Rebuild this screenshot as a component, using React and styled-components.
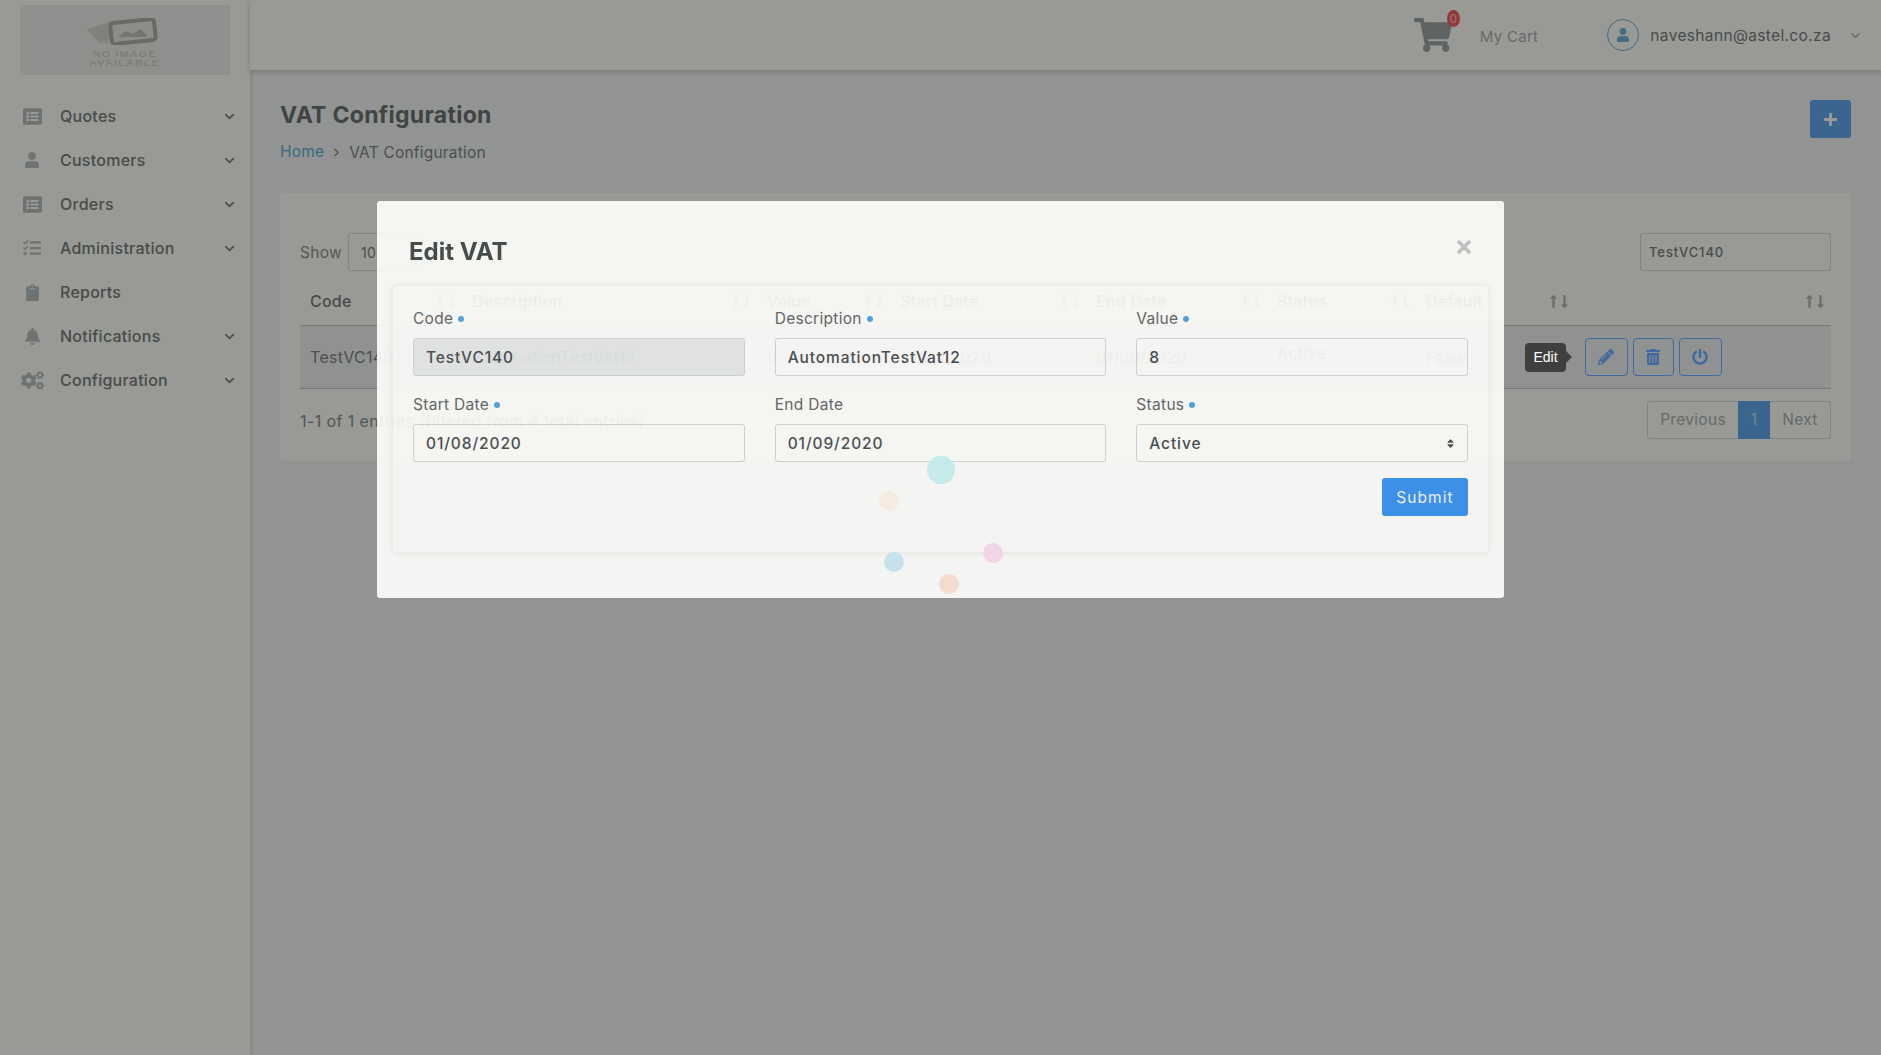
import styled, { createGlobalStyle } from "styled-components";
import {
  FaListAlt,
  FaUser,
  FaTasks,
  FaClipboard,
  FaBell,
  FaCogs,
  FaShoppingCart,
  FaPencilAlt,
  FaTrashAlt,
  FaPowerOff,
  FaPlus,
  FaTimes,
  FaSort,
  FaLongArrowAltUp,
  FaLongArrowAltDown,
} from "react-icons/fa";
import { FiChevronDown, FiChevronRight } from "react-icons/fi";

const GlobalStyle = createGlobalStyle`
  html, body {
    margin: 0;
    padding: 0;
    height: 100%;
    overflow: hidden;
  }
  body {
    font-family: Inter, "Open Sans", sans-serif;
    color: #6c757d;
    background: #f1f4f3;
  }
  * { box-sizing: border-box; }
`;

const NAV_ITEMS = [
  { label: "Quotes", icon: <FaListAlt size={19} />, arrow: true },
  { label: "Customers", icon: <FaUser size={16} />, arrow: true },
  { label: "Orders", icon: <FaListAlt size={19} />, arrow: true },
  { label: "Administration", icon: <FaTasks size={18} />, arrow: true },
  { label: "Reports", icon: <FaClipboard size={17} /> },
  { label: "Notifications", icon: <FaBell size={17} />, arrow: true },
  { label: "Configuration", icon: <FaCogs size={23} />, arrow: true },
];

const COLUMNS = [
  { label: "Code", width: 162 },
  { label: "Description", width: 295 },
  { label: "Value", width: 133 },
  { label: "Start Date", width: 196 },
  { label: "End Date", width: 181 },
  { label: "Status", width: 149 },
  { label: "Default", width: 159 },
  { label: "", width: 256 },
];

const SPINNER_DOTS = [
  { x: 940.5, y: 470, size: 28, color: "#c4eaea" },
  { x: 889, y: 500.5, size: 20, color: "#f5ebe0" },
  { x: 992.5, y: 552.5, size: 20, color: "#f2d5e6" },
  { x: 894, y: 562, size: 20, color: "#c4e1ec" },
  { x: 948.5, y: 584, size: 20, color: "#f3dbd1" },
];

const SortArrows = () => (
  <SortIcon>
    <FaLongArrowAltUp />
    <FaLongArrowAltDown />
  </SortIcon>
);

const App = () => {
  return (
    <Page>
      <GlobalStyle />
      <Sidebar>
        <Logo>
          <svg width="76" height="27" viewBox="0 0 76 27">
            <path d="M0 11 L24 4 L21 25 L13 25 Z" fill="#d3d4ce" />
            <rect
              x="24"
              y="3"
              width="44"
              height="21"
              rx="3"
              transform="rotate(-6 46 14)"
              fill="#e8e8e5"
              stroke="#aeaeab"
              strokeWidth="4"
            />
            <path d="M31 19 L39 13 L46 16 L53 11 L60 17 L60 19 Z" fill="#c0c0bd" />
          </svg>
          <LogoText>NO IMAGE</LogoText>
          <LogoText>AVAILABLE</LogoText>
        </Logo>
        <Nav>
          {NAV_ITEMS.map((item) => (
            <NavItem key={item.label}>
              <NavIcon>{item.icon}</NavIcon>
              <NavLabel>{item.label}</NavLabel>
              {item.arrow && (
                <NavArrow>
                  <FiChevronDown size={15} strokeWidth={2.5} />
                </NavArrow>
              )}
            </NavItem>
          ))}
        </Nav>
      </Sidebar>

      <Main>
        <Topbar>
          <CartBlock>
            <CartIcon>
              <FaShoppingCart size={38} />
              <CartBadge>0</CartBadge>
            </CartIcon>
            <CartLabel>My Cart</CartLabel>
          </CartBlock>
          <UserBlock>
            <Avatar>
              <FaUser size={14} />
            </Avatar>
            <UserEmail>naveshann@astel.co.za</UserEmail>
            <UserArrow>
              <FiChevronDown size={15} strokeWidth={2} />
            </UserArrow>
          </UserBlock>
        </Topbar>

        <Content>
          <PageHead>
            <div>
              <Title>VAT Configuration</Title>
              <Breadcrumb>
                <HomeLink>Home</HomeLink>
                <FiChevronRight size={13} />
                <span>VAT Configuration</span>
              </Breadcrumb>
            </div>
            <AddButton>
              <FaPlus size={15} />
            </AddButton>
          </PageHead>

          <TableCard>
            <TableTools>
              <ShowBox>
                <span>Show</span>
                <ShowSelect>10</ShowSelect>
              </ShowBox>
              <SearchInput defaultValue="TestVC140" />
            </TableTools>
            <DataTable>
              <colgroup>
                {COLUMNS.map((col) => (
                  <col key={col.label} style={{ width: col.width }} />
                ))}
              </colgroup>
              <thead>
                <tr>
                  {COLUMNS.map((col) => (
                    <HeadCell key={col.label}>
                      <HeadInner>
                        {col.label}
                        <SortArrows />
                      </HeadInner>
                    </HeadCell>
                  ))}
                </tr>
              </thead>
              <tbody>
                <BodyRow>
                  <BodyCell>TestVC140</BodyCell>
                  <BodyCell>AutomationTestVat12</BodyCell>
                  <BodyCell>8</BodyCell>
                  <BodyCell>01/08/2020</BodyCell>
                  <BodyCell>01/09/2020</BodyCell>
                  <BodyCell $raised>Active</BodyCell>
                  <BodyCell>False</BodyCell>
                  <ActionCell>
                    <Tooltip>Edit</Tooltip>
                    <ActionButtons>
                      <ActionButton $width={43}>
                        <FaPencilAlt size={16} />
                      </ActionButton>
                      <ActionButton $width={41}>
                        <FaTrashAlt size={16} />
                      </ActionButton>
                      <ActionButton $width={43}>
                        <FaPowerOff size={16} />
                      </ActionButton>
                    </ActionButtons>
                  </ActionCell>
                </BodyRow>
              </tbody>
            </DataTable>
            <TableFooter>
              <FooterText>1-1 of 1 entries (filtered from 4 total entries)</FooterText>
              <Pagination>
                <PageLink $width={90}>Previous</PageLink>
                <PageLink $width={32} $active>
                  1
                </PageLink>
                <PageLink $width={60}>Next</PageLink>
              </Pagination>
            </TableFooter>
          </TableCard>
        </Content>
      </Main>

      <Overlay>
        <Modal>
          <ModalHeader>
            <ModalTitle>Edit VAT</ModalTitle>
            <CloseButton>
              <FaTimes size={20} />
            </CloseButton>
          </ModalHeader>
          <FormCard>
            <FormGrid>
              <Field>
                <FieldLabel $required>Code</FieldLabel>
                <TextInput defaultValue="TestVC140" $disabled readOnly />
              </Field>
              <Field>
                <FieldLabel $required>Description</FieldLabel>
                <TextInput defaultValue="AutomationTestVat12" />
              </Field>
              <Field>
                <FieldLabel $required>Value</FieldLabel>
                <TextInput defaultValue="8" />
              </Field>
              <Field>
                <FieldLabel $required>Start Date</FieldLabel>
                <TextInput defaultValue="01/08/2020" />
              </Field>
              <Field>
                <FieldLabel>End Date</FieldLabel>
                <TextInput defaultValue="01/09/2020" />
              </Field>
              <Field>
                <FieldLabel $required>Status</FieldLabel>
                <SelectBox>
                  Active
                  <FaSort size={11} />
                </SelectBox>
              </Field>
            </FormGrid>
            <FormActions>
              <SubmitButton>Submit</SubmitButton>
            </FormActions>
          </FormCard>
        </Modal>
        {SPINNER_DOTS.map((dot) => (
          <SpinnerDot
            key={dot.x}
            $size={dot.size}
            $color={dot.color}
            style={{ left: dot.x - dot.size / 2, top: dot.y - dot.size / 2 }}
          />
        ))}
      </Overlay>
    </Page>
  );
};

export default App;

const Page = styled.div`
  display: flex;
  width: 100%;
  height: 100vh;
`;

const Sidebar = styled.aside`
  flex: 0 0 250px;
  height: 100%;
  background: #fdfdf9;
  box-shadow: 1px 0 4px rgba(0, 0, 0, 0.15);
  padding: 5px 20px 0;
`;

const Logo = styled.div`
  height: 70px;
  background: #ededeb;
  display: flex;
  flex-direction: column;
  align-items: center;
  padding-top: 13px;

  svg {
    flex: none;
    margin-bottom: 5px;
  }
`;

const LogoText = styled.div`
  font-family: "Liberation Sans", sans-serif;
  font-size: 9px;
  line-height: 9px;
  color: #cfcfcc;
  letter-spacing: 1px;
  font-weight: 700;
  transform: scaleX(1.2);
`;

const Nav = styled.nav`
  margin-top: 19px;
`;

const NavItem = styled.div`
  height: 44px;
  display: flex;
  align-items: center;
`;

const NavIcon = styled.span`
  width: 26px;
  display: flex;
  justify-content: center;
  color: #b4bcc0;
  margin-right: 15px;
  margin-left: -1px;
`;

const NavLabel = styled.span`
  flex: 1;
  font-size: 16px;
  font-weight: 500;
  letter-spacing: 0.25px;
  color: #767a7c;
`;

const NavArrow = styled.span`
  display: flex;
  color: #767a7c;
  margin-right: -7px;
`;

const Main = styled.div`
  flex: 1;
  min-width: 0;
  display: flex;
  flex-direction: column;
`;

const Topbar = styled.header`
  height: 70px;
  background: #fdfdf9;
  box-shadow: 0 2px 6px rgba(0, 0, 0, 0.2);
  display: flex;
  align-items: center;
  justify-content: flex-end;
`;

const CartBlock = styled.div`
  display: flex;
  align-items: center;
  margin-right: 69px;
`;

const CartIcon = styled.div`
  position: relative;
  display: flex;
  color: #9aa3a5;
  margin-right: 28px;
`;

const CartBadge = styled.span`
  position: absolute;
  top: -6px;
  right: -8px;
  width: 13px;
  height: 17px;
  border-radius: 50%;
  background: #f25a5f;
  color: #f5c7c7;
  font-size: 12px;
  display: flex;
  align-items: center;
  justify-content: center;
`;

const CartLabel = styled.span`
  margin-top: 2px;
  font-size: 15px;
  letter-spacing: 0.3px;
  color: #a8aeb0;
`;

const UserBlock = styled.div`
  display: flex;
  align-items: center;
  padding-right: 18px;
`;

const Avatar = styled.span`
  width: 32px;
  height: 32px;
  border-radius: 50%;
  border: 1px solid #6db1d8;
  color: #6db1d8;
  display: flex;
  align-items: center;
  justify-content: center;
  margin-right: 11px;
`;

const UserEmail = styled.span`
  font-size: 15.5px;
  letter-spacing: 0.35px;
  color: #767a7c;
`;

const UserArrow = styled.span`
  display: flex;
  color: #9aa0a2;
  margin-left: 17px;
`;

const Content = styled.main`
  flex: 1;
  padding: 31px 30px 0;
`;

const PageHead = styled.div`
  display: flex;
  justify-content: space-between;
  align-items: flex-start;
  height: 92px;
`;

const Title = styled.h1`
  margin: 0;
  font-size: 23px;
  line-height: 28px;
  font-weight: 700;
  letter-spacing: 0.3px;
  color: #6a6e70;
`;

const Breadcrumb = styled.div`
  display: flex;
  align-items: center;
  gap: 6px;
  margin-top: 14px;
  font-size: 15.5px;
  letter-spacing: 0.2px;
  color: #7d8184;
`;

const HomeLink = styled.a`
  color: #5fa8d8;
  font-size: 15.5px;
  margin-top: -2px;
`;

const AddButton = styled.button`
  width: 41px;
  height: 38px;
  margin-top: -1px;
  border: 0;
  border-radius: 3px;
  background: #5fa5ee;
  color: #fff;
  display: flex;
  align-items: center;
  justify-content: center;
`;

const TableCard = styled.section`
  background: #fdfdf9;
  border-radius: 4px;
  padding: 40px 20px 22px;
  height: 268px;
`;

const TableTools = styled.div`
  display: flex;
  justify-content: space-between;
  align-items: center;
  height: 38px;
`;

const ShowBox = styled.div`
  display: flex;
  align-items: center;
  gap: 6px;
  font-size: 15.5px;
  letter-spacing: 0.3px;
  color: #8b8f92;
`;

const ShowSelect = styled.div`
  width: 75px;
  height: 38px;
  border: 1px solid #d5d8dc;
  border-radius: 3px;
  padding: 0 12px;
  display: flex;
  align-items: center;
  font-size: 14px;
  color: #7d8184;
`;

const SearchInput = styled.input`
  width: 191px;
  height: 38px;
  border: 1px solid #d5d8dc;
  border-radius: 3px;
  background: transparent;
  padding: 0 8px;
  font: 500 13px Inter, sans-serif;
  letter-spacing: 0.9px;
  color: #767a7c;
`;

const DataTable = styled.table`
  width: 100%;
  table-layout: fixed;
  border-collapse: collapse;
`;

const HeadCell = styled.th`
  height: 54px;
  padding: 7px 10px 0;
  text-align: left;
  font-size: 16px;
  font-weight: 500;
  letter-spacing: 0.2px;
  color: #767a7c;
  border-bottom: 1px solid #c3c6ca;
`;

const HeadInner = styled.div`
  display: flex;
  align-items: center;
`;

const SortIcon = styled.span`
  display: flex;
  margin-left: auto;
  margin-right: -5px;
  font-size: 15px;
  color: #b0b3b5;

  svg {
    margin: 0 -2px;
  }
`;

const BodyRow = styled.tr`
  background: #eef0f3;
`;

const BodyCell = styled.td`
  height: 63px;
  padding: ${(props) => (props.$raised ? "0 10px 8px" : "0 10px")};
  font-size: 16px;
  letter-spacing: 0.3px;
  color: #7d8184;
  border-bottom: 1px solid #c3c6ca;
`;

const ActionCell = styled.td`
  position: relative;
  z-index: 20;
  padding: 0 10px;
  border-bottom: 1px solid #c3c6ca;
`;

const ActionButtons = styled.div`
  display: flex;
  gap: 5px;
  opacity: 0.6;
`;

const ActionButton = styled.button`
  width: ${(props) => props.$width}px;
  height: 38px;
  border: 1px solid #0a4fa8;
  border-radius: 4px;
  background: transparent;
  color: #0a4fa8;
  display: flex;
  align-items: center;
  justify-content: center;
  padding: 0 2px 0 0;
`;

const Tooltip = styled.div`
  position: absolute;
  left: -50px;
  top: 17px;
  width: 41px;
  height: 29px;
  background: #3f3f3f;
  border-radius: 4px;
  color: #fff;
  font: 14px "Liberation Sans", sans-serif;
  display: flex;
  align-items: center;
  justify-content: center;

  &::after {
    content: "";
    position: absolute;
    left: 100%;
    top: 8px;
    border-left: 6px solid #3f3f3f;
    border-top: 6px solid transparent;
    border-bottom: 6px solid transparent;
  }
`;

const TableFooter = styled.div`
  display: flex;
  justify-content: space-between;
  align-items: center;
  margin-top: 12px;
`;

const FooterText = styled.span`
  margin-top: 3px;
  font-size: 16px;
  letter-spacing: 0.4px;
  color: #85898c;
`;

const Pagination = styled.div`
  display: flex;
  height: 38px;
  border: 1px solid #d5d8dc;
  border-radius: 3px;
`;

const PageLink = styled.span`
  width: ${(props) => props.$width}px;
  margin: -1px 0;
  display: flex;
  align-items: center;
  justify-content: center;
  font-size: 15.5px;
  letter-spacing: 0.3px;
  background: ${(props) => (props.$active ? "#5fa5ee" : "transparent")};
  color: ${(props) => (props.$active ? "#c5d6e8" : "#a8aeb0")};
`;

const Overlay = styled.div`
  position: fixed;
  inset: 0;
  z-index: 10;
  background: rgba(2, 4, 0, 0.4);
  display: flex;
  justify-content: center;
  align-items: flex-start;
  padding-top: 201px;
`;

const Modal = styled.div`
  width: 1127px;
  height: 397px;
  padding: 0 16px;
  background: #fffffd;
  border-radius: 3px;
  opacity: 0.9;
`;

const ModalHeader = styled.div`
  position: relative;
  height: 85px;
  padding: 35px 16px 0;
`;

const ModalTitle = styled.h2`
  margin: 0;
  font-size: 24px;
  line-height: 32px;
  font-weight: 700;
  color: #3c4446;
`;

const CloseButton = styled.span`
  position: absolute;
  top: 36px;
  right: 14px;
  display: flex;
  color: #c3c5c5;
`;

const FormCard = styled.div`
  height: 266px;
  padding: 20px 20px 0;
  border-radius: 3px;
  box-shadow: 0 0 6px rgba(60, 60, 50, 0.12);
`;

const FormGrid = styled.div`
  display: grid;
  grid-template-columns: repeat(3, 1fr);
  column-gap: 30px;
  row-gap: 16px;
`;

const Field = styled.div`
  display: flex;
  flex-direction: column;
`;

const FieldLabel = styled.label`
  height: 24px;
  margin-bottom: 8px;
  display: flex;
  align-items: center;
  font-size: 15.5px;
  letter-spacing: 0.3px;
  color: #5b6063;

  &::after {
    content: "";
    display: ${(props) => (props.$required ? "block" : "none")};
    width: 6px;
    height: 6px;
    margin: 2px 0 0 5px;
    border-radius: 50%;
    background: #4aa3df;
  }
`;

const TextInput = styled.input`
  height: 38px;
  border: 1px solid #d3d7db;
  border-radius: 3px;
  background: ${(props) => (props.$disabled ? "#e9ebeb" : "transparent")};
  padding: 0 12px;
  font: 500 15.5px Inter, sans-serif;
  letter-spacing: 0.9px;
  color: #42484b;
  outline: none;
`;

const SelectBox = styled.div`
  height: 38px;
  border: 1px solid #d3d7db;
  border-radius: 3px;
  padding: 0 11px 0 12px;
  display: flex;
  align-items: center;
  justify-content: space-between;
  font-size: 15.5px;
  font-weight: 500;
  letter-spacing: 0.9px;
  color: #42484b;
`;

const FormActions = styled.div`
  display: flex;
  justify-content: flex-end;
  margin-top: 16px;
`;

const SubmitButton = styled.button`
  width: 86px;
  height: 38px;
  border: 0;
  border-radius: 3px;
  background: #3390f1;
  color: #f4f8fc;
  font: 400 15.5px Inter, sans-serif;
  letter-spacing: 1.1px;
`;

const SpinnerDot = styled.span`
  position: absolute;
  width: ${(props) => props.$size}px;
  height: ${(props) => props.$size}px;
  border-radius: 50%;
  background: ${(props) => props.$color};
`;
